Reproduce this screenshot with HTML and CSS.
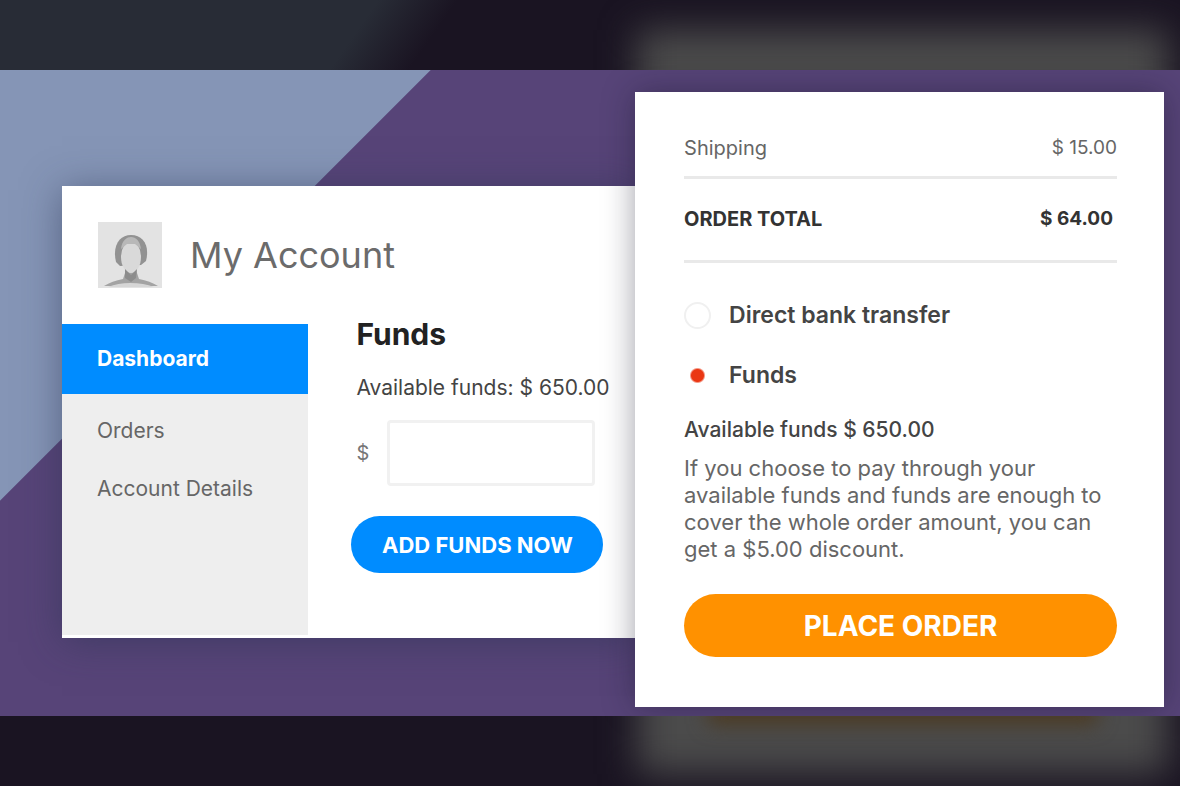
FILE: index.html
```html
<!DOCTYPE html>
<html lang="en">
<head>
  <meta charset="UTF-8">
  <meta name="viewport" content="width=device-width, initial-scale=1.0">
  <title>Account Funds</title>
  <link rel="stylesheet" href="styles.css">
</head>
<body>
  <div class="band band-top"></div>

  <main class="stage">
    <section class="account-card">
      <header class="account-header">
        <svg class="avatar" viewBox="0 0 64 66" aria-hidden="true">
          <rect width="64" height="66" fill="#e3e3e3"/>
          <path d="M6 64 Q14 59 25 57 L28 48 H38 L41 57 Q52 59 60 64 Z" fill="#a3a3a3"/>
          <path d="M10 65 Q20 61 32 61 Q46 61 56 65 Z" fill="#d6d6d6"/>
          <path d="M18 40 C14 23 22 13 33 13 C45 13 52 23 48 39 L43 43 L22 44 Z" fill="#929292"/>
          <ellipse cx="33" cy="35" rx="10" ry="16" fill="#d9d9d9"/>
          <path d="M23 27 C24 18 29 15 33 15 C38 15 42 19 43 27 L37 22 H29 Z" fill="#b8b8b8"/>
          <path d="M27 47 L33 53 L39 47 L38 56 L33 60 L27 56 Z" fill="#8c8c8c"/>
        </svg>
        <h1>My Account</h1>
      </header>
      <div class="account-body">
        <nav class="account-nav">
          <a href="#" class="active">Dashboard</a>
          <a href="#">Orders</a>
          <a href="#">Account Details</a>
        </nav>
        <form class="funds">
          <h2>Funds</h2>
          <p>Available funds: $ 650.00</p>
          <div class="amount">
            <label for="amount">$</label>
            <input type="text" id="amount">
          </div>
          <button type="button" class="add-button">ADD FUNDS NOW</button>
        </form>
      </div>
    </section>

    <form class="order-card">
      <div class="order-row">
        <span>Shipping</span>
        <span class="price">$ 15.00</span>
      </div>
      <div class="order-row total">
        <span>ORDER TOTAL</span>
        <span class="price">$ 64.00</span>
      </div>
      <div class="payment">
        <input type="radio" name="payment" id="bank">
        <label for="bank">Direct bank transfer</label>
      </div>
      <div class="payment">
        <input type="radio" name="payment" id="funds" checked>
        <label for="funds">Funds</label>
      </div>
      <p class="available">Available funds $ 650.00</p>
      <p class="info">If you choose to pay through your available funds and funds are enough to cover the whole order amount, you can get a $5.00 discount.</p>
      <button type="button" class="order-button">PLACE ORDER</button>
    </form>
  </main>

  <div class="band band-bottom"></div>
</body>
</html>
```
FILE: styles.css
```css
* {
  box-sizing: border-box;
}

body {
  margin: 0;
  min-height: 100vh;
  display: flex;
  flex-direction: column;
  background-color: #1a1422;
  font-family: Inter, "Open Sans", sans-serif;
  color: #444;
}

h1, h2, p {
  margin: 0;
}

button, input {
  font-family: inherit;
}

/* dark strips above and below the cards */
.band {
  position: relative;
  flex: 1;
  min-height: 70px;
  overflow: hidden;
}

.band-top {
  background: linear-gradient(125deg, #282c36 310px, #1a1422 375px);
}

.band::before,
.band-bottom::after {
  content: "";
  position: absolute;
  left: 54%;
  right: 1%;
  height: 140px;
  background-color: #4b4b4b;
  filter: blur(18px);
}

.band-top::before {
  top: 30px;
}

.band-bottom::before {
  bottom: 12px;
}

.band-bottom::after {
  left: 60%;
  right: 7%;
  bottom: 62px;
  height: 24px;
  background-color: #4c3a20;
  filter: blur(10px);
}

.stage {
  display: flex;
  align-items: flex-start;
  padding: 22px 16px 9px 62px;
  background: linear-gradient(135deg, #8595b6 304px, #574478 305px);
}

.account-card {
  flex: 1;
  margin-top: 94px;
  padding-bottom: 3px;
  background-color: #fff;
  box-shadow: 0 4px 36px rgba(40, 50, 80, 0.5);
}

.account-header {
  display: flex;
  align-items: center;
  gap: 28px;
  height: 138px;
  padding: 0 36px;
}

.avatar {
  width: 64px;
  height: 66px;
}

h1 {
  font-size: 36px;
  font-weight: 400;
  color: #6b6b6b;
}

.account-body {
  display: flex;
}

.account-nav {
  width: 43%;
  min-height: 311px;
  background-color: #eee;
}

.account-nav a {
  display: block;
  padding: 0 35px;
  font-size: 21px;
  line-height: 58px;
  color: #666;
  text-decoration: none;
}

.account-nav .active {
  margin-bottom: 8px;
  line-height: 70px;
  font-weight: 700;
  color: #fff;
  background-color: #008cff;
}

.funds {
  flex: 1;
  padding-left: 48px;
}

h2 {
  margin-bottom: 24px;
  font-size: 30px;
  line-height: 20px;
  color: #222;
}

.funds p {
  line-height: 40px;
  font-size: 21px;
  white-space: nowrap;
}

.amount {
  display: flex;
  align-items: center;
  gap: 18px;
  margin: 12px 0 30px;
  font-size: 20px;
  color: #777;
}

.amount input {
  width: 208px;
  height: 66px;
  padding: 0 16px;
  border: 3px solid #f1f1f1;
  border-radius: 4px;
  font-size: 20px;
  outline: none;
}

.add-button,
.order-button {
  border: none;
  border-radius: 32px;
  color: #fff;
  font-weight: 700;
  cursor: pointer;
}

.add-button {
  width: 252px;
  height: 57px;
  margin-left: -5px;
  background-color: #008cff;
  font-size: 22px;
}

.order-card {
  position: relative;
  width: 48%;
  padding: 26px 47px 50px 49px;
  background-color: #fff;
  box-shadow: 0 0 30px rgba(20, 20, 40, 0.4);
}

.order-row {
  display: flex;
  justify-content: space-between;
  height: 61px;
  border-bottom: 3px solid #e9e9e9;
  font-size: 20px;
  line-height: 60px;
  color: #666;
}

.order-row.total {
  height: 84px;
  line-height: 80px;
  padding-right: 4px;
  margin-bottom: 22px;
  font-weight: 700;
  color: #333;
}

.price {
  font-size: 19px;
}

.payment {
  display: flex;
  align-items: center;
  gap: 18px;
  height: 60px;
  font-size: 23px;
  font-weight: 600;
}

.payment input {
  appearance: none;
  width: 27px;
  height: 27px;
  margin: 0;
  border: 2px solid #f0f0f0;
  border-radius: 50%;
  outline: none;
}

.payment input:checked {
  border-color: #fff;
  background: radial-gradient(circle, #ea3713 6px, #fff 8px);
}

.available {
  line-height: 50px;
  font-size: 21px;
  font-weight: 500;
}

.info {
  margin-bottom: 31px;
  font-size: 22px;
  line-height: 27px;
  color: #666;
}

.order-button {
  width: 100%;
  height: 63px;
  background-color: #ff9100;
  font-size: 28px;
}
```
